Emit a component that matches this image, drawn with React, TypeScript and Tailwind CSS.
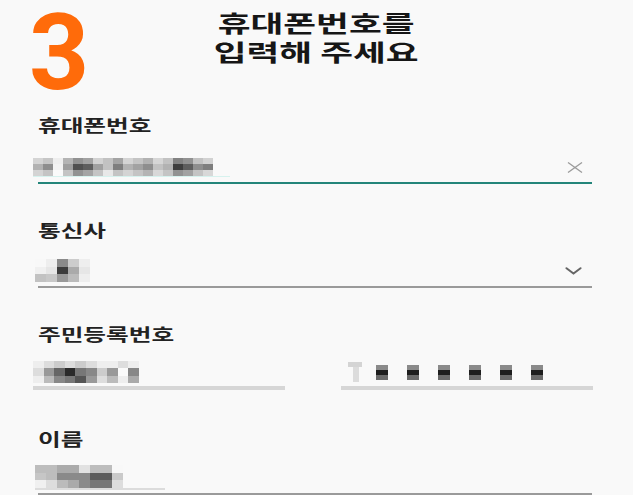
const KR = "font-['Noto_Sans_CJK_KR','Noto_Sans',sans-serif]";

// pixelated (blurred) value cells, row by row
const PHONE = [
  ['#d4d4d4', '#c6c6c6', '#eeeeee', '#b4b4b4', '#929292', '#a2a2a2', '#d2d2d2', '#c2c2c2', '#a4a4a4', '#d4d4d4', '#c4c4c4', '#b2b2b2', '#d6d6d6', '#c2c2c2', '#828282', '#929292', '#c2c2c2', '#d2d2d2'],
  ['#b2b2b2', '#8e8e8e', '#f2f2f2', '#9e9e9e', '#505050', '#5e5e5e', '#a0a0a0', '#c2c2c2', '#7e7e7e', '#b2b2b2', '#a2a2a2', '#8e8e8e', '#c2c2c2', '#b2b2b2', '#3e3e3e', '#5e5e5e', '#8e8e8e', '#7e7e7e'],
  ['#d4d4d4', '#c4c4c4', '#fafafa', '#c4c4c4', '#929292', '#a4a4a4', '#c4c4c4', '#e8e8e8', '#c4c4c4', '#d4d4d4', '#c4c4c4', '#b4b4b4', '#d8d8d8', '#c4c4c4', '#929292', '#a2a2a2', '#c4c4c4', '#d8d8d8'],
];

const CARRIER = [
  ['#f8f8f8', '#eeeeee', '#8a8a8a', '#cccccc', '#eeeeee'],
  ['#f0f0f0', '#e6e6e6', '#3c3c3c', '#aaaaaa', '#e6e6e6'],
  ['#c2c2c2', '#c8c8c8', '#999999', '#bbbbbb', '#eeeeee'],
];

const BIRTH = [
  ['#eeeeee', '#dddddd', '#cccccc', '#dddddd', '#cccccc', '#dddddd', '#eeeeee', '#eeeeee', '#dddddd', '#eeeeee'],
  ['#dddddd', '#999999', '#666666', '#2a2a2a', '#777777', '#888888', '#cccccc', '#999999', '#fafafa', '#888888'],
  ['#eeeeee', '#bbbbbb', '#888888', '#777777', '#555555', '#999999', '#dddddd', '#bbbbbb', '#eeeeee', '#aaaaaa'],
];

const NAME = [
  ['#bdbdbd', '#bdbdbd', '#ababab', '#ababab', '#e2e2e2', '#bdbdbd', '#bdbdbd', '#f8f8f8'],
  ['#c6c6c6', '#bdbdbd', '#8a8a8a', '#8a8a8a', '#8a8a8a', '#5c5c5c', '#5c5c5c', '#cacaca'],
  ['#f0f0f0', '#dddddd', '#bbbbbb', '#aaaaaa', '#8a8a8a', '#777777', '#777777', '#dddddd'],
];

const Mosaic = ({ cells, cw, ch }: { cells: string[][]; cw: number; ch: number }) => (
  <div className="flex flex-col">
    {cells.map((row, i) => (
      <div key={i} className="flex">
        {row.map((c, j) => (
          <div key={j} style={{ width: cw, height: ch, backgroundColor: c }} />
        ))}
      </div>
    ))}
  </div>
);

const Label = ({ children }: { children: string }) => (
  <div className={`${KR} h-[20px] text-[17px] leading-[20px] font-bold text-[#222] origin-left scale-x-[1.45] whitespace-nowrap`}>
    {children}
  </div>
);

const ClearIcon = () => (
  <svg width="16" height="11" viewBox="0 0 16 11" fill="none" stroke="#9c9c9c" strokeWidth="1.3">
    <path d="M1 0.5 L15 10.5 M15 0.5 L1 10.5" />
  </svg>
);

const Chevron = () => (
  <svg width="17" height="8" viewBox="0 0 17 8" fill="none" stroke="#666" strokeWidth="2" strokeLinecap="round">
    <path d="M1.5 1.2 L8.5 6.5 L15.5 1.2" />
  </svg>
);

const MaskDots = () => (
  <div className="flex items-center">
    <div className="w-[14px] h-[20px] flex flex-col items-start">
      <div className="w-[14px] h-[5px] bg-[#d4d4d4]" />
      <div className="ml-[5px] w-[6px] h-[15px] bg-[#dcdcdc]" />
    </div>
    <div className="ml-[14px] flex items-center gap-[19px]">
      {[0, 1, 2, 3, 4, 5].map((i) => (
        <div key={i} className="flex items-center bg-[#cfcfcf]">
          <div className="flex flex-col">
            <div className="w-[12px] h-[5px] bg-[#8a8a8a]" />
            <div className="w-[12px] h-[5px] bg-[#1e1e1e]" />
            <div className="w-[12px] h-[5px] bg-[#6a6a6a]" />
          </div>
        </div>
      ))}
    </div>
  </div>
);

export default function App() {
  return (
    <div className="w-full min-h-[495px] bg-[#f9f9f9] overflow-hidden">
      <div className="h-[115px] grid grid-cols-[1fr_auto_1fr]">
        <div className="pl-[29px] pt-[1px]">
          <div className="font-['Roboto',sans-serif] font-bold text-[105px] leading-[106px] text-[#ff6b0a]">3</div>
        </div>
        <div className={`${KR} pt-[8px] text-center text-[23px] leading-[29px] font-bold text-[#161616] scale-x-[1.55]`}>
          <div>휴대폰번호를</div>
          <div>입력해 주세요</div>
        </div>
        <div />
      </div>

      <div className="pl-[38px] pr-[41px]">
        <Label>휴대폰번호</Label>
        <div className="mt-[18px] h-[29px] flex items-center justify-between">
          <div className="-ml-[5px] flex flex-col">
            <Mosaic cells={PHONE} cw={10} ch={6.34} />
            <div className="w-[197px] h-[1px] bg-[#d6f2ee]" />
          </div>
          <div className="mr-[9px]">
            <ClearIcon />
          </div>
        </div>
        <div className="h-[2px] bg-[#23857a]" />

        <div className="mt-[36px]">
          <Label>통신사</Label>
        </div>
        <div className="mt-[15px] h-[31px] flex items-center justify-between">
          <div className="-ml-[3px]">
            <Mosaic cells={CARRIER} cw={11} ch={7.67} />
          </div>
          <div className="mr-[10px]">
            <Chevron />
          </div>
        </div>
        <div className="h-[2px] bg-[#9a9a9a]" />

        <div className="mt-[36px]">
          <Label>주민등록번호</Label>
        </div>
        <div className="mt-[17px] -ml-[5px] -mr-[1px] flex justify-between">
          <div className="w-[252px] flex flex-col">
            <Mosaic cells={BIRTH} cw={10.6} ch={7.34} />
            <div className="mt-[3px] h-[4px] bg-[#d6d6d6]" />
          </div>
          <div className="w-[252px] flex flex-col">
            <div className="h-[22px] pl-[7px] flex items-center">
              <MaskDots />
            </div>
            <div className="mt-[3px] h-[4px] bg-[#d6d6d6]" />
          </div>
        </div>

        <div className="mt-[39px]">
          <Label>이름</Label>
        </div>
        <div className="mt-[16px] h-[28px] -ml-[3px] flex flex-col">
          <Mosaic cells={NAME} cw={11} ch={7.67} />
          <div className="w-[130px] h-[2px] bg-[#dcdcdc]" />
        </div>
        <div className="h-[2px] bg-[#9a9a9a]" />
      </div>
    </div>
  );
}
